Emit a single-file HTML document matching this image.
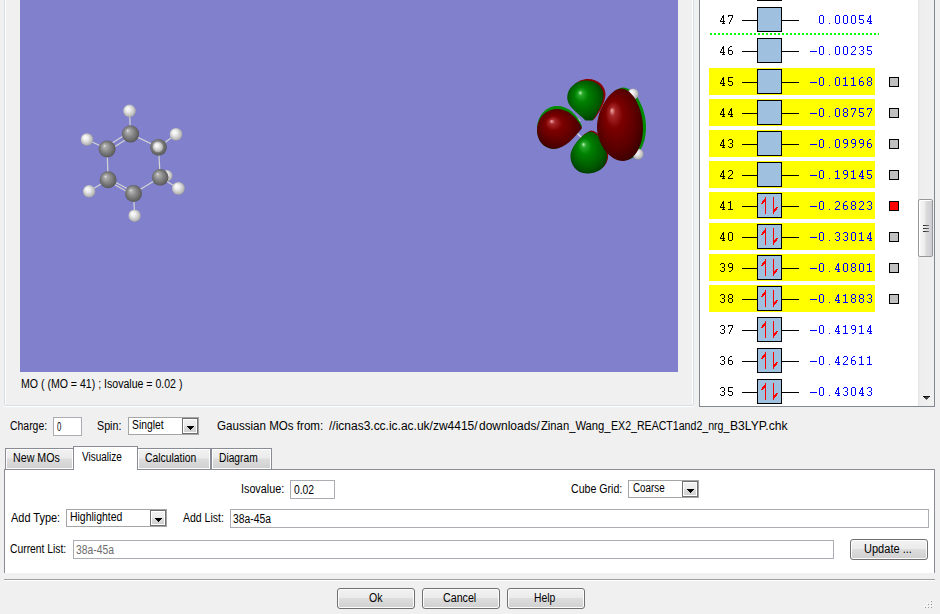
<!DOCTYPE html>
<html><head><meta charset="utf-8">
<style>
*{margin:0;padding:0;box-sizing:border-box}
html,body{width:940px;height:614px;overflow:hidden;background:#f0f0f0;position:relative;font-family:"Liberation Sans",sans-serif;font-size:12px;color:#000}
.a{position:absolute}
.t{position:absolute;white-space:pre;line-height:14px;font-size:12px;transform-origin:0 0;color:#000}
.inp{position:absolute;background:#fff;border:1px solid #abadb3}
.combo{position:absolute;background:#fff;border:1px solid #a5a5a5}
.dbtn{position:absolute;border:1px solid #707070;background:linear-gradient(#f2f2f2 0,#ebebeb 50%,#dddddd 50%,#cfcfcf 100%);box-shadow:inset 0 0 0 1px #fff}
.dbtn:after{content:"";position:absolute;left:4px;top:7px;width:7px;height:4px;background:linear-gradient(#000,#000) 0 0/7px 1px no-repeat,linear-gradient(#000,#000) 1px 1px/5px 1px no-repeat,linear-gradient(#000,#000) 2px 2px/3px 1px no-repeat,linear-gradient(#000,#000) 3px 3px/1px 1px no-repeat}
.btn{position:absolute;border:1px solid #707070;border-radius:3px;background:linear-gradient(#f2f2f2 0,#ebebeb 45%,#dddddd 50%,#cfcfcf 100%);box-shadow:inset 0 0 0 1px #fcfcfc}
.tab{position:absolute;border:1px solid #898c95;background:linear-gradient(#f2f2f2 0,#ebebeb 45%,#dddddd 50%,#cfcfcf 100%);box-shadow:inset 0 0 0 1px #fff}
.num{position:absolute;font-family:"Liberation Mono",monospace;font-size:13.33px;line-height:16px;white-space:pre;color:#000}
.en{position:absolute;font-family:"Liberation Mono",monospace;font-size:13.33px;line-height:16px;white-space:pre;color:#0000ff}
</style></head><body>
<div class="a" style="left:4px;top:-10px;width:690px;height:416px;border:1px solid #d5dfe5;border-radius:2px;box-shadow:inset 1px 0 0 #fff,inset -1px 0 0 #fff,0 1px 0 #fff"></div>
<div class="a" style="left:20px;top:0;width:658px;height:372px;background:#8080cc;overflow:hidden">
<svg width="658" height="372" viewBox="20 0 658 372">
<defs>
<radialGradient id="gC" cx="0.5" cy="0.5" r="0.58" fx="0.33" fy="0.3">
<stop offset="0" stop-color="#f0f0f0"/><stop offset="0.12" stop-color="#b4b4b4"/><stop offset="0.45" stop-color="#8a8a8a"/><stop offset="0.8" stop-color="#646464"/><stop offset="1" stop-color="#444444"/></radialGradient>
<radialGradient id="gH" cx="0.5" cy="0.5" r="0.58" fx="0.33" fy="0.3">
<stop offset="0" stop-color="#ffffff"/><stop offset="0.35" stop-color="#ececec"/><stop offset="0.75" stop-color="#bdbdbd"/><stop offset="1" stop-color="#8c8c8c"/></radialGradient>
<radialGradient id="gR" cx="0.5" cy="0.5" r="0.62" fx="0.32" fy="0.3">
<stop offset="0" stop-color="#f0b0b0"/><stop offset="0.1" stop-color="#a82828"/><stop offset="0.3" stop-color="#7c0000"/><stop offset="0.7" stop-color="#560000"/><stop offset="1" stop-color="#2a0000"/></radialGradient>
<radialGradient id="gG" cx="0.5" cy="0.5" r="0.62" fx="0.35" fy="0.3">
<stop offset="0" stop-color="#c0f4c0"/><stop offset="0.1" stop-color="#28a828"/><stop offset="0.3" stop-color="#008000"/><stop offset="0.7" stop-color="#005800"/><stop offset="1" stop-color="#002c00"/></radialGradient>
</defs>
<g stroke="#d4d4d4" stroke-width="1.2" fill="none">
<line x1="130.5" y1="133.9" x2="129.5" y2="110.9"/>
<line x1="107.1" y1="149" x2="86.9" y2="139.5"/>
<line x1="158.5" y1="147.3" x2="176" y2="134.3"/>
<line x1="108.1" y1="179.7" x2="89.1" y2="191.3"/>
<line x1="133.5" y1="193.5" x2="134.6" y2="215.7"/>
<line x1="160.2" y1="177.3" x2="178.4" y2="188.4"/>
<line x1="130.5" y1="133.9" x2="158.5" y2="147.3"/>
<line x1="158.5" y1="147.3" x2="160.2" y2="177.3"/>
<line x1="160.2" y1="177.3" x2="133.5" y2="193.5"/>
<line x1="107.1" y1="149" x2="108.1" y2="179.7"/>
<line x1="129.5" y1="132" x2="106" y2="147"/>
<line x1="131.5" y1="136" x2="108" y2="151"/>
<line x1="107" y1="178" x2="133" y2="191.5"/>
<line x1="109" y1="181.5" x2="134" y2="195.5"/>
</g>
<circle cx="129.5" cy="110.9" r="6.3" fill="url(#gH)"/>
<circle cx="86.9" cy="139.5" r="6.2" fill="url(#gH)"/>
<circle cx="176" cy="134.3" r="6.3" fill="url(#gH)"/>
<circle cx="89.1" cy="191.3" r="6.2" fill="url(#gH)"/>
<circle cx="134.6" cy="215.7" r="6.2" fill="url(#gH)"/>
<circle cx="178.4" cy="188.4" r="6.4" fill="url(#gH)"/>
<circle cx="167" cy="175.6" r="5.6" fill="url(#gH)"/>
<circle cx="130.5" cy="133.9" r="8.6" fill="url(#gC)"/>
<circle cx="107.1" cy="149" r="8.5" fill="url(#gC)"/>
<circle cx="158.5" cy="147.3" r="8.4" fill="url(#gC)"/>
<circle cx="108.1" cy="179.7" r="8.5" fill="url(#gC)"/>
<circle cx="133.5" cy="193.5" r="8.5" fill="url(#gC)"/>
<circle cx="160.2" cy="177.3" r="8.3" fill="url(#gC)"/>
<circle cx="158" cy="147" r="5.2" fill="url(#gH)"/>

<!-- orbital -->
<g stroke="#e0e0e0" stroke-width="1.2">
<line x1="575" y1="116" x2="580" y2="121"/>
<line x1="577" y1="133" x2="582" y2="138"/>
<line x1="600" y1="108" x2="605" y2="103"/>
<line x1="601" y1="143" x2="606" y2="148"/>
</g>
<path d="M 588,79 C 599,79 606,87 605.5,95 C 605,103 599,113 594,119.5 L 587,119.5 C 581,113 571,107 569.5,99 C 568,88 577,79 588,79 Z" fill="#8a0000"/>
<path d="M 586.5,80.5 C 597,80.5 604,88 603.5,96 C 603,104 597,114 592.5,120.5 L 585.5,120.5 C 579,114 569,108 567.5,100 C 566,89 575,80.5 586.5,80.5 Z" fill="url(#gG)"/>
<path d="M 582,126 C 575,136 565,148 553,149 C 543,148 537,140 537,129 C 537,116 546,106 557,106 C 568,106 577,114 582,126 Z" fill="#008a00"/>
<path d="M 582,128 C 575,137 565,149 553,149 C 543,148 537,140 537,130 C 537,118 546,109 557,109 C 568,109 577,117 582,128 Z" fill="url(#gR)"/>
<path d="M 591,130.5 C 598,131 606,141 608,154 C 609,164 601,172.5 588,172.5 C 577,172.5 571,163 571.5,154 C 572,146 583,133 591,130.5 Z" fill="#8a0000"/>
<path d="M 590,131.5 C 597,132 605,142 607,155 C 608,165 600,173.5 587,173.5 C 576,173.5 570,164 570.5,155 C 571,147 582,134 590,131.5 Z" fill="url(#gG)"/>
<path d="M 623.5,87.5 C 634,87.5 646,107 646,127 C 646,146 637,160 625,160 C 611,160 600,142 600,126 C 600,109 612,87.5 623.5,87.5 Z" fill="#008a00"/>
<circle cx="633" cy="94" r="5.5" fill="url(#gH)"/>
<circle cx="638" cy="154" r="5.5" fill="url(#gH)"/>
<path d="M 621.5,88.5 C 632,88.5 643,108 643,128 C 643,147 634,161 623,161 C 609,161 597,143 597,127 C 597,110 610,88.5 621.5,88.5 Z" fill="url(#gR)"/>
</svg>
</div>
<div class="a" style="left:699px;top:-10px;width:236px;height:417px;border:1px solid #828790;background:#fff"></div>
<div class="a" style="left:918px;top:0;width:16px;height:406px;background:linear-gradient(90deg,#e3e3e3 0,#eeeeee 2px,#f0f0f0 100%)"></div>
<div class="a" style="left:918px;top:199px;width:15px;height:58px;border:1px solid #979797;border-radius:2px;background:linear-gradient(90deg,#f8f8f8 0,#ececec 45%,#dcdcdc 52%,#cdcdd1 100%);box-shadow:inset 1px 1px 0 #fff"></div>
<div class="a" style="left:923px;top:225px;width:6px;height:1px;background:linear-gradient(90deg,#222,#777)"></div>
<div class="a" style="left:923px;top:228px;width:6px;height:1px;background:linear-gradient(90deg,#222,#777)"></div>
<div class="a" style="left:923px;top:231px;width:6px;height:1px;background:linear-gradient(90deg,#222,#777)"></div>
<div class="a" style="left:923px;top:396px;width:7px;height:4px;background:linear-gradient(#111,#111) 0 0/7px 1px no-repeat,linear-gradient(90deg,#222,#666) 1px 1px/5px 1px no-repeat,linear-gradient(#444,#444) 2px 2px/3px 1px no-repeat,linear-gradient(#666,#666) 3px 3px/1px 1px no-repeat"></div>
<div class="a" style="left:700px;top:0;width:218px;height:406px;overflow:hidden">
<svg class="a" style="left:0;top:0" width="218" height="406" shape-rendering="crispEdges"><rect x="42" y="-11" width="15" height="1" fill="#000"/><rect x="82" y="-11" width="17" height="1" fill="#000"/><rect x="57" y="-24" width="25" height="25" fill="#000"/><rect x="58" y="-23" width="23" height="23" fill="#a0c0e0"/><rect x="42" y="20" width="15" height="1" fill="#000"/><rect x="82" y="20" width="17" height="1" fill="#000"/><rect x="57" y="7" width="25" height="25" fill="#000"/><rect x="58" y="8" width="23" height="23" fill="#a0c0e0"/><g fill="#000"><path transform="translate(20 15)" d="M3 0h1v1h-1zM2 1h2v1h-2zM2 2h2v1h-2zM1 3h1v1h-1zM3 3h1v1h-1zM1 4h1v1h-1zM3 4h1v1h-1zM0 5h1v1h-1zM3 5h1v1h-1zM0 6h5v1h-5zM3 7h1v1h-1zM2 8h3v1h-3z"/><path transform="translate(28 15)" d="M0 0h5v1h-5zM0 1h1v1h-1zM4 1h1v1h-1zM4 2h1v1h-1zM3 3h1v1h-1zM3 4h1v1h-1zM2 5h1v1h-1zM2 6h1v1h-1zM1 7h1v1h-1zM1 8h1v1h-1z"/></g><g fill="#0000ff"><path transform="translate(119 15)" d="M1 0h3v1h-3zM0 1h1v1h-1zM4 1h1v1h-1zM0 2h1v1h-1zM4 2h1v1h-1zM0 3h1v1h-1zM4 3h1v1h-1zM0 4h1v1h-1zM4 4h1v1h-1zM0 5h1v1h-1zM4 5h1v1h-1zM0 6h1v1h-1zM4 6h1v1h-1zM0 7h1v1h-1zM4 7h1v1h-1zM1 8h3v1h-3z"/><path transform="translate(126 15)" d="M3 8h1v1h-1z"/><path transform="translate(135 15)" d="M1 0h3v1h-3zM0 1h1v1h-1zM4 1h1v1h-1zM0 2h1v1h-1zM4 2h1v1h-1zM0 3h1v1h-1zM4 3h1v1h-1zM0 4h1v1h-1zM4 4h1v1h-1zM0 5h1v1h-1zM4 5h1v1h-1zM0 6h1v1h-1zM4 6h1v1h-1zM0 7h1v1h-1zM4 7h1v1h-1zM1 8h3v1h-3z"/><path transform="translate(143 15)" d="M1 0h3v1h-3zM0 1h1v1h-1zM4 1h1v1h-1zM0 2h1v1h-1zM4 2h1v1h-1zM0 3h1v1h-1zM4 3h1v1h-1zM0 4h1v1h-1zM4 4h1v1h-1zM0 5h1v1h-1zM4 5h1v1h-1zM0 6h1v1h-1zM4 6h1v1h-1zM0 7h1v1h-1zM4 7h1v1h-1zM1 8h3v1h-3z"/><path transform="translate(151 15)" d="M1 0h3v1h-3zM0 1h1v1h-1zM4 1h1v1h-1zM0 2h1v1h-1zM4 2h1v1h-1zM0 3h1v1h-1zM4 3h1v1h-1zM0 4h1v1h-1zM4 4h1v1h-1zM0 5h1v1h-1zM4 5h1v1h-1zM0 6h1v1h-1zM4 6h1v1h-1zM0 7h1v1h-1zM4 7h1v1h-1zM1 8h3v1h-3z"/><path transform="translate(159 15)" d="M0 0h5v1h-5zM0 1h1v1h-1zM0 2h1v1h-1zM0 3h1v1h-1zM0 4h4v1h-4zM4 5h1v1h-1zM4 6h1v1h-1zM0 7h1v1h-1zM4 7h1v1h-1zM1 8h3v1h-3z"/><path transform="translate(167 15)" d="M3 0h1v1h-1zM2 1h2v1h-2zM2 2h2v1h-2zM1 3h1v1h-1zM3 3h1v1h-1zM1 4h1v1h-1zM3 4h1v1h-1zM0 5h1v1h-1zM3 5h1v1h-1zM0 6h5v1h-5zM3 7h1v1h-1zM2 8h3v1h-3z"/></g><rect x="42" y="51" width="15" height="1" fill="#000"/><rect x="82" y="51" width="17" height="1" fill="#000"/><rect x="57" y="38" width="25" height="25" fill="#000"/><rect x="58" y="39" width="23" height="23" fill="#a0c0e0"/><g fill="#000"><path transform="translate(20 46)" d="M3 0h1v1h-1zM2 1h2v1h-2zM2 2h2v1h-2zM1 3h1v1h-1zM3 3h1v1h-1zM1 4h1v1h-1zM3 4h1v1h-1zM0 5h1v1h-1zM3 5h1v1h-1zM0 6h5v1h-5zM3 7h1v1h-1zM2 8h3v1h-3z"/><path transform="translate(28 46)" d="M2 0h2v1h-2zM1 1h1v1h-1zM0 2h1v1h-1zM0 3h1v1h-1zM0 4h4v1h-4zM0 5h1v1h-1zM4 5h1v1h-1zM0 6h1v1h-1zM4 6h1v1h-1zM0 7h1v1h-1zM4 7h1v1h-1zM1 8h3v1h-3z"/></g><g fill="#0000ff"><path transform="translate(110 46)" d="M0 5h7v1h-7z"/><path transform="translate(119 46)" d="M1 0h3v1h-3zM0 1h1v1h-1zM4 1h1v1h-1zM0 2h1v1h-1zM4 2h1v1h-1zM0 3h1v1h-1zM4 3h1v1h-1zM0 4h1v1h-1zM4 4h1v1h-1zM0 5h1v1h-1zM4 5h1v1h-1zM0 6h1v1h-1zM4 6h1v1h-1zM0 7h1v1h-1zM4 7h1v1h-1zM1 8h3v1h-3z"/><path transform="translate(126 46)" d="M3 8h1v1h-1z"/><path transform="translate(135 46)" d="M1 0h3v1h-3zM0 1h1v1h-1zM4 1h1v1h-1zM0 2h1v1h-1zM4 2h1v1h-1zM0 3h1v1h-1zM4 3h1v1h-1zM0 4h1v1h-1zM4 4h1v1h-1zM0 5h1v1h-1zM4 5h1v1h-1zM0 6h1v1h-1zM4 6h1v1h-1zM0 7h1v1h-1zM4 7h1v1h-1zM1 8h3v1h-3z"/><path transform="translate(143 46)" d="M1 0h3v1h-3zM0 1h1v1h-1zM4 1h1v1h-1zM0 2h1v1h-1zM4 2h1v1h-1zM0 3h1v1h-1zM4 3h1v1h-1zM0 4h1v1h-1zM4 4h1v1h-1zM0 5h1v1h-1zM4 5h1v1h-1zM0 6h1v1h-1zM4 6h1v1h-1zM0 7h1v1h-1zM4 7h1v1h-1zM1 8h3v1h-3z"/><path transform="translate(151 46)" d="M1 0h3v1h-3zM0 1h1v1h-1zM4 1h1v1h-1zM4 2h1v1h-1zM4 3h1v1h-1zM3 4h1v1h-1zM2 5h1v1h-1zM1 6h1v1h-1zM0 7h1v1h-1zM0 8h5v1h-5z"/><path transform="translate(159 46)" d="M1 0h3v1h-3zM0 1h1v1h-1zM4 1h1v1h-1zM4 2h1v1h-1zM4 3h1v1h-1zM2 4h2v1h-2zM4 5h1v1h-1zM4 6h1v1h-1zM0 7h1v1h-1zM4 7h1v1h-1zM1 8h3v1h-3z"/><path transform="translate(167 46)" d="M0 0h5v1h-5zM0 1h1v1h-1zM0 2h1v1h-1zM0 3h1v1h-1zM0 4h4v1h-4zM4 5h1v1h-1zM4 6h1v1h-1zM0 7h1v1h-1zM4 7h1v1h-1zM1 8h3v1h-3z"/></g><rect x="9" y="68" width="166" height="27" fill="#ff0"/><rect x="189" y="77" width="10" height="10" fill="#000"/><rect x="190" y="78" width="8" height="8" fill="#c0c0c0"/><rect x="42" y="82" width="15" height="1" fill="#000"/><rect x="82" y="82" width="17" height="1" fill="#000"/><rect x="57" y="69" width="25" height="25" fill="#000"/><rect x="58" y="70" width="23" height="23" fill="#a0c0e0"/><g fill="#000"><path transform="translate(20 77)" d="M3 0h1v1h-1zM2 1h2v1h-2zM2 2h2v1h-2zM1 3h1v1h-1zM3 3h1v1h-1zM1 4h1v1h-1zM3 4h1v1h-1zM0 5h1v1h-1zM3 5h1v1h-1zM0 6h5v1h-5zM3 7h1v1h-1zM2 8h3v1h-3z"/><path transform="translate(28 77)" d="M0 0h5v1h-5zM0 1h1v1h-1zM0 2h1v1h-1zM0 3h1v1h-1zM0 4h4v1h-4zM4 5h1v1h-1zM4 6h1v1h-1zM0 7h1v1h-1zM4 7h1v1h-1zM1 8h3v1h-3z"/></g><g fill="#0000ff"><path transform="translate(110 77)" d="M0 5h7v1h-7z"/><path transform="translate(119 77)" d="M1 0h3v1h-3zM0 1h1v1h-1zM4 1h1v1h-1zM0 2h1v1h-1zM4 2h1v1h-1zM0 3h1v1h-1zM4 3h1v1h-1zM0 4h1v1h-1zM4 4h1v1h-1zM0 5h1v1h-1zM4 5h1v1h-1zM0 6h1v1h-1zM4 6h1v1h-1zM0 7h1v1h-1zM4 7h1v1h-1zM1 8h3v1h-3z"/><path transform="translate(126 77)" d="M3 8h1v1h-1z"/><path transform="translate(135 77)" d="M1 0h3v1h-3zM0 1h1v1h-1zM4 1h1v1h-1zM0 2h1v1h-1zM4 2h1v1h-1zM0 3h1v1h-1zM4 3h1v1h-1zM0 4h1v1h-1zM4 4h1v1h-1zM0 5h1v1h-1zM4 5h1v1h-1zM0 6h1v1h-1zM4 6h1v1h-1zM0 7h1v1h-1zM4 7h1v1h-1zM1 8h3v1h-3z"/><path transform="translate(143 77)" d="M2 0h1v1h-1zM0 1h3v1h-3zM2 2h1v1h-1zM2 3h1v1h-1zM2 4h1v1h-1zM2 5h1v1h-1zM2 6h1v1h-1zM2 7h1v1h-1zM0 8h5v1h-5z"/><path transform="translate(151 77)" d="M2 0h1v1h-1zM0 1h3v1h-3zM2 2h1v1h-1zM2 3h1v1h-1zM2 4h1v1h-1zM2 5h1v1h-1zM2 6h1v1h-1zM2 7h1v1h-1zM0 8h5v1h-5z"/><path transform="translate(159 77)" d="M2 0h2v1h-2zM1 1h1v1h-1zM0 2h1v1h-1zM0 3h1v1h-1zM0 4h4v1h-4zM0 5h1v1h-1zM4 5h1v1h-1zM0 6h1v1h-1zM4 6h1v1h-1zM0 7h1v1h-1zM4 7h1v1h-1zM1 8h3v1h-3z"/><path transform="translate(167 77)" d="M1 0h3v1h-3zM0 1h1v1h-1zM4 1h1v1h-1zM0 2h1v1h-1zM4 2h1v1h-1zM0 3h1v1h-1zM4 3h1v1h-1zM1 4h3v1h-3zM0 5h1v1h-1zM4 5h1v1h-1zM0 6h1v1h-1zM4 6h1v1h-1zM0 7h1v1h-1zM4 7h1v1h-1zM1 8h3v1h-3z"/></g><rect x="9" y="99" width="166" height="27" fill="#ff0"/><rect x="189" y="108" width="10" height="10" fill="#000"/><rect x="190" y="109" width="8" height="8" fill="#c0c0c0"/><rect x="42" y="113" width="15" height="1" fill="#000"/><rect x="82" y="113" width="17" height="1" fill="#000"/><rect x="57" y="100" width="25" height="25" fill="#000"/><rect x="58" y="101" width="23" height="23" fill="#a0c0e0"/><g fill="#000"><path transform="translate(20 108)" d="M3 0h1v1h-1zM2 1h2v1h-2zM2 2h2v1h-2zM1 3h1v1h-1zM3 3h1v1h-1zM1 4h1v1h-1zM3 4h1v1h-1zM0 5h1v1h-1zM3 5h1v1h-1zM0 6h5v1h-5zM3 7h1v1h-1zM2 8h3v1h-3z"/><path transform="translate(28 108)" d="M3 0h1v1h-1zM2 1h2v1h-2zM2 2h2v1h-2zM1 3h1v1h-1zM3 3h1v1h-1zM1 4h1v1h-1zM3 4h1v1h-1zM0 5h1v1h-1zM3 5h1v1h-1zM0 6h5v1h-5zM3 7h1v1h-1zM2 8h3v1h-3z"/></g><g fill="#0000ff"><path transform="translate(110 108)" d="M0 5h7v1h-7z"/><path transform="translate(119 108)" d="M1 0h3v1h-3zM0 1h1v1h-1zM4 1h1v1h-1zM0 2h1v1h-1zM4 2h1v1h-1zM0 3h1v1h-1zM4 3h1v1h-1zM0 4h1v1h-1zM4 4h1v1h-1zM0 5h1v1h-1zM4 5h1v1h-1zM0 6h1v1h-1zM4 6h1v1h-1zM0 7h1v1h-1zM4 7h1v1h-1zM1 8h3v1h-3z"/><path transform="translate(126 108)" d="M3 8h1v1h-1z"/><path transform="translate(135 108)" d="M1 0h3v1h-3zM0 1h1v1h-1zM4 1h1v1h-1zM0 2h1v1h-1zM4 2h1v1h-1zM0 3h1v1h-1zM4 3h1v1h-1zM0 4h1v1h-1zM4 4h1v1h-1zM0 5h1v1h-1zM4 5h1v1h-1zM0 6h1v1h-1zM4 6h1v1h-1zM0 7h1v1h-1zM4 7h1v1h-1zM1 8h3v1h-3z"/><path transform="translate(143 108)" d="M1 0h3v1h-3zM0 1h1v1h-1zM4 1h1v1h-1zM0 2h1v1h-1zM4 2h1v1h-1zM0 3h1v1h-1zM4 3h1v1h-1zM1 4h3v1h-3zM0 5h1v1h-1zM4 5h1v1h-1zM0 6h1v1h-1zM4 6h1v1h-1zM0 7h1v1h-1zM4 7h1v1h-1zM1 8h3v1h-3z"/><path transform="translate(151 108)" d="M0 0h5v1h-5zM0 1h1v1h-1zM4 1h1v1h-1zM4 2h1v1h-1zM3 3h1v1h-1zM3 4h1v1h-1zM2 5h1v1h-1zM2 6h1v1h-1zM1 7h1v1h-1zM1 8h1v1h-1z"/><path transform="translate(159 108)" d="M0 0h5v1h-5zM0 1h1v1h-1zM0 2h1v1h-1zM0 3h1v1h-1zM0 4h4v1h-4zM4 5h1v1h-1zM4 6h1v1h-1zM0 7h1v1h-1zM4 7h1v1h-1zM1 8h3v1h-3z"/><path transform="translate(167 108)" d="M0 0h5v1h-5zM0 1h1v1h-1zM4 1h1v1h-1zM4 2h1v1h-1zM3 3h1v1h-1zM3 4h1v1h-1zM2 5h1v1h-1zM2 6h1v1h-1zM1 7h1v1h-1zM1 8h1v1h-1z"/></g><rect x="9" y="130" width="166" height="27" fill="#ff0"/><rect x="189" y="139" width="10" height="10" fill="#000"/><rect x="190" y="140" width="8" height="8" fill="#c0c0c0"/><rect x="42" y="144" width="15" height="1" fill="#000"/><rect x="82" y="144" width="17" height="1" fill="#000"/><rect x="57" y="131" width="25" height="25" fill="#000"/><rect x="58" y="132" width="23" height="23" fill="#a0c0e0"/><g fill="#000"><path transform="translate(20 139)" d="M3 0h1v1h-1zM2 1h2v1h-2zM2 2h2v1h-2zM1 3h1v1h-1zM3 3h1v1h-1zM1 4h1v1h-1zM3 4h1v1h-1zM0 5h1v1h-1zM3 5h1v1h-1zM0 6h5v1h-5zM3 7h1v1h-1zM2 8h3v1h-3z"/><path transform="translate(28 139)" d="M1 0h3v1h-3zM0 1h1v1h-1zM4 1h1v1h-1zM4 2h1v1h-1zM4 3h1v1h-1zM2 4h2v1h-2zM4 5h1v1h-1zM4 6h1v1h-1zM0 7h1v1h-1zM4 7h1v1h-1zM1 8h3v1h-3z"/></g><g fill="#0000ff"><path transform="translate(110 139)" d="M0 5h7v1h-7z"/><path transform="translate(119 139)" d="M1 0h3v1h-3zM0 1h1v1h-1zM4 1h1v1h-1zM0 2h1v1h-1zM4 2h1v1h-1zM0 3h1v1h-1zM4 3h1v1h-1zM0 4h1v1h-1zM4 4h1v1h-1zM0 5h1v1h-1zM4 5h1v1h-1zM0 6h1v1h-1zM4 6h1v1h-1zM0 7h1v1h-1zM4 7h1v1h-1zM1 8h3v1h-3z"/><path transform="translate(126 139)" d="M3 8h1v1h-1z"/><path transform="translate(135 139)" d="M1 0h3v1h-3zM0 1h1v1h-1zM4 1h1v1h-1zM0 2h1v1h-1zM4 2h1v1h-1zM0 3h1v1h-1zM4 3h1v1h-1zM0 4h1v1h-1zM4 4h1v1h-1zM0 5h1v1h-1zM4 5h1v1h-1zM0 6h1v1h-1zM4 6h1v1h-1zM0 7h1v1h-1zM4 7h1v1h-1zM1 8h3v1h-3z"/><path transform="translate(143 139)" d="M1 0h3v1h-3zM0 1h1v1h-1zM4 1h1v1h-1zM0 2h1v1h-1zM4 2h1v1h-1zM0 3h1v1h-1zM4 3h1v1h-1zM1 4h4v1h-4zM4 5h1v1h-1zM4 6h1v1h-1zM3 7h1v1h-1zM1 8h2v1h-2z"/><path transform="translate(151 139)" d="M1 0h3v1h-3zM0 1h1v1h-1zM4 1h1v1h-1zM0 2h1v1h-1zM4 2h1v1h-1zM0 3h1v1h-1zM4 3h1v1h-1zM1 4h4v1h-4zM4 5h1v1h-1zM4 6h1v1h-1zM3 7h1v1h-1zM1 8h2v1h-2z"/><path transform="translate(159 139)" d="M1 0h3v1h-3zM0 1h1v1h-1zM4 1h1v1h-1zM0 2h1v1h-1zM4 2h1v1h-1zM0 3h1v1h-1zM4 3h1v1h-1zM1 4h4v1h-4zM4 5h1v1h-1zM4 6h1v1h-1zM3 7h1v1h-1zM1 8h2v1h-2z"/><path transform="translate(167 139)" d="M2 0h2v1h-2zM1 1h1v1h-1zM0 2h1v1h-1zM0 3h1v1h-1zM0 4h4v1h-4zM0 5h1v1h-1zM4 5h1v1h-1zM0 6h1v1h-1zM4 6h1v1h-1zM0 7h1v1h-1zM4 7h1v1h-1zM1 8h3v1h-3z"/></g><rect x="9" y="161" width="166" height="27" fill="#ff0"/><rect x="189" y="170" width="10" height="10" fill="#000"/><rect x="190" y="171" width="8" height="8" fill="#c0c0c0"/><rect x="42" y="175" width="15" height="1" fill="#000"/><rect x="82" y="175" width="17" height="1" fill="#000"/><rect x="57" y="162" width="25" height="25" fill="#000"/><rect x="58" y="163" width="23" height="23" fill="#a0c0e0"/><g fill="#000"><path transform="translate(20 170)" d="M3 0h1v1h-1zM2 1h2v1h-2zM2 2h2v1h-2zM1 3h1v1h-1zM3 3h1v1h-1zM1 4h1v1h-1zM3 4h1v1h-1zM0 5h1v1h-1zM3 5h1v1h-1zM0 6h5v1h-5zM3 7h1v1h-1zM2 8h3v1h-3z"/><path transform="translate(28 170)" d="M1 0h3v1h-3zM0 1h1v1h-1zM4 1h1v1h-1zM4 2h1v1h-1zM4 3h1v1h-1zM3 4h1v1h-1zM2 5h1v1h-1zM1 6h1v1h-1zM0 7h1v1h-1zM0 8h5v1h-5z"/></g><g fill="#0000ff"><path transform="translate(110 170)" d="M0 5h7v1h-7z"/><path transform="translate(119 170)" d="M1 0h3v1h-3zM0 1h1v1h-1zM4 1h1v1h-1zM0 2h1v1h-1zM4 2h1v1h-1zM0 3h1v1h-1zM4 3h1v1h-1zM0 4h1v1h-1zM4 4h1v1h-1zM0 5h1v1h-1zM4 5h1v1h-1zM0 6h1v1h-1zM4 6h1v1h-1zM0 7h1v1h-1zM4 7h1v1h-1zM1 8h3v1h-3z"/><path transform="translate(126 170)" d="M3 8h1v1h-1z"/><path transform="translate(135 170)" d="M2 0h1v1h-1zM0 1h3v1h-3zM2 2h1v1h-1zM2 3h1v1h-1zM2 4h1v1h-1zM2 5h1v1h-1zM2 6h1v1h-1zM2 7h1v1h-1zM0 8h5v1h-5z"/><path transform="translate(143 170)" d="M1 0h3v1h-3zM0 1h1v1h-1zM4 1h1v1h-1zM0 2h1v1h-1zM4 2h1v1h-1zM0 3h1v1h-1zM4 3h1v1h-1zM1 4h4v1h-4zM4 5h1v1h-1zM4 6h1v1h-1zM3 7h1v1h-1zM1 8h2v1h-2z"/><path transform="translate(151 170)" d="M2 0h1v1h-1zM0 1h3v1h-3zM2 2h1v1h-1zM2 3h1v1h-1zM2 4h1v1h-1zM2 5h1v1h-1zM2 6h1v1h-1zM2 7h1v1h-1zM0 8h5v1h-5z"/><path transform="translate(159 170)" d="M3 0h1v1h-1zM2 1h2v1h-2zM2 2h2v1h-2zM1 3h1v1h-1zM3 3h1v1h-1zM1 4h1v1h-1zM3 4h1v1h-1zM0 5h1v1h-1zM3 5h1v1h-1zM0 6h5v1h-5zM3 7h1v1h-1zM2 8h3v1h-3z"/><path transform="translate(167 170)" d="M0 0h5v1h-5zM0 1h1v1h-1zM0 2h1v1h-1zM0 3h1v1h-1zM0 4h4v1h-4zM4 5h1v1h-1zM4 6h1v1h-1zM0 7h1v1h-1zM4 7h1v1h-1zM1 8h3v1h-3z"/></g><rect x="9" y="192" width="166" height="27" fill="#ff0"/><rect x="189" y="201" width="10" height="10" fill="#000"/><rect x="190" y="202" width="8" height="8" fill="#f00"/><rect x="42" y="206" width="15" height="1" fill="#000"/><rect x="82" y="206" width="17" height="1" fill="#000"/><rect x="57" y="193" width="25" height="25" fill="#000"/><rect x="58" y="194" width="23" height="23" fill="#a0c0e0"/><rect x="65" y="197" width="1.4" height="17" fill="#f00"/><polygon points="66,197 60.5,204 62.799999999999955,204 66,200" fill="#f00"/><rect x="73" y="197" width="1.4" height="17" fill="#f00"/><polygon points="73,214 78.5,207 76.20000000000005,207 73,211" fill="#f00"/><g fill="#000"><path transform="translate(20 201)" d="M3 0h1v1h-1zM2 1h2v1h-2zM2 2h2v1h-2zM1 3h1v1h-1zM3 3h1v1h-1zM1 4h1v1h-1zM3 4h1v1h-1zM0 5h1v1h-1zM3 5h1v1h-1zM0 6h5v1h-5zM3 7h1v1h-1zM2 8h3v1h-3z"/><path transform="translate(28 201)" d="M2 0h1v1h-1zM0 1h3v1h-3zM2 2h1v1h-1zM2 3h1v1h-1zM2 4h1v1h-1zM2 5h1v1h-1zM2 6h1v1h-1zM2 7h1v1h-1zM0 8h5v1h-5z"/></g><g fill="#0000ff"><path transform="translate(110 201)" d="M0 5h7v1h-7z"/><path transform="translate(119 201)" d="M1 0h3v1h-3zM0 1h1v1h-1zM4 1h1v1h-1zM0 2h1v1h-1zM4 2h1v1h-1zM0 3h1v1h-1zM4 3h1v1h-1zM0 4h1v1h-1zM4 4h1v1h-1zM0 5h1v1h-1zM4 5h1v1h-1zM0 6h1v1h-1zM4 6h1v1h-1zM0 7h1v1h-1zM4 7h1v1h-1zM1 8h3v1h-3z"/><path transform="translate(126 201)" d="M3 8h1v1h-1z"/><path transform="translate(135 201)" d="M1 0h3v1h-3zM0 1h1v1h-1zM4 1h1v1h-1zM4 2h1v1h-1zM4 3h1v1h-1zM3 4h1v1h-1zM2 5h1v1h-1zM1 6h1v1h-1zM0 7h1v1h-1zM0 8h5v1h-5z"/><path transform="translate(143 201)" d="M2 0h2v1h-2zM1 1h1v1h-1zM0 2h1v1h-1zM0 3h1v1h-1zM0 4h4v1h-4zM0 5h1v1h-1zM4 5h1v1h-1zM0 6h1v1h-1zM4 6h1v1h-1zM0 7h1v1h-1zM4 7h1v1h-1zM1 8h3v1h-3z"/><path transform="translate(151 201)" d="M1 0h3v1h-3zM0 1h1v1h-1zM4 1h1v1h-1zM0 2h1v1h-1zM4 2h1v1h-1zM0 3h1v1h-1zM4 3h1v1h-1zM1 4h3v1h-3zM0 5h1v1h-1zM4 5h1v1h-1zM0 6h1v1h-1zM4 6h1v1h-1zM0 7h1v1h-1zM4 7h1v1h-1zM1 8h3v1h-3z"/><path transform="translate(159 201)" d="M1 0h3v1h-3zM0 1h1v1h-1zM4 1h1v1h-1zM4 2h1v1h-1zM4 3h1v1h-1zM3 4h1v1h-1zM2 5h1v1h-1zM1 6h1v1h-1zM0 7h1v1h-1zM0 8h5v1h-5z"/><path transform="translate(167 201)" d="M1 0h3v1h-3zM0 1h1v1h-1zM4 1h1v1h-1zM4 2h1v1h-1zM4 3h1v1h-1zM2 4h2v1h-2zM4 5h1v1h-1zM4 6h1v1h-1zM0 7h1v1h-1zM4 7h1v1h-1zM1 8h3v1h-3z"/></g><rect x="9" y="223" width="166" height="27" fill="#ff0"/><rect x="189" y="232" width="10" height="10" fill="#000"/><rect x="190" y="233" width="8" height="8" fill="#c0c0c0"/><rect x="42" y="237" width="15" height="1" fill="#000"/><rect x="82" y="237" width="17" height="1" fill="#000"/><rect x="57" y="224" width="25" height="25" fill="#000"/><rect x="58" y="225" width="23" height="23" fill="#a0c0e0"/><rect x="65" y="228" width="1.4" height="17" fill="#f00"/><polygon points="66,228 60.5,235 62.799999999999955,235 66,231" fill="#f00"/><rect x="73" y="228" width="1.4" height="17" fill="#f00"/><polygon points="73,245 78.5,238 76.20000000000005,238 73,242" fill="#f00"/><g fill="#000"><path transform="translate(20 232)" d="M3 0h1v1h-1zM2 1h2v1h-2zM2 2h2v1h-2zM1 3h1v1h-1zM3 3h1v1h-1zM1 4h1v1h-1zM3 4h1v1h-1zM0 5h1v1h-1zM3 5h1v1h-1zM0 6h5v1h-5zM3 7h1v1h-1zM2 8h3v1h-3z"/><path transform="translate(28 232)" d="M1 0h3v1h-3zM0 1h1v1h-1zM4 1h1v1h-1zM0 2h1v1h-1zM4 2h1v1h-1zM0 3h1v1h-1zM4 3h1v1h-1zM0 4h1v1h-1zM4 4h1v1h-1zM0 5h1v1h-1zM4 5h1v1h-1zM0 6h1v1h-1zM4 6h1v1h-1zM0 7h1v1h-1zM4 7h1v1h-1zM1 8h3v1h-3z"/></g><g fill="#0000ff"><path transform="translate(110 232)" d="M0 5h7v1h-7z"/><path transform="translate(119 232)" d="M1 0h3v1h-3zM0 1h1v1h-1zM4 1h1v1h-1zM0 2h1v1h-1zM4 2h1v1h-1zM0 3h1v1h-1zM4 3h1v1h-1zM0 4h1v1h-1zM4 4h1v1h-1zM0 5h1v1h-1zM4 5h1v1h-1zM0 6h1v1h-1zM4 6h1v1h-1zM0 7h1v1h-1zM4 7h1v1h-1zM1 8h3v1h-3z"/><path transform="translate(126 232)" d="M3 8h1v1h-1z"/><path transform="translate(135 232)" d="M1 0h3v1h-3zM0 1h1v1h-1zM4 1h1v1h-1zM4 2h1v1h-1zM4 3h1v1h-1zM2 4h2v1h-2zM4 5h1v1h-1zM4 6h1v1h-1zM0 7h1v1h-1zM4 7h1v1h-1zM1 8h3v1h-3z"/><path transform="translate(143 232)" d="M1 0h3v1h-3zM0 1h1v1h-1zM4 1h1v1h-1zM4 2h1v1h-1zM4 3h1v1h-1zM2 4h2v1h-2zM4 5h1v1h-1zM4 6h1v1h-1zM0 7h1v1h-1zM4 7h1v1h-1zM1 8h3v1h-3z"/><path transform="translate(151 232)" d="M1 0h3v1h-3zM0 1h1v1h-1zM4 1h1v1h-1zM0 2h1v1h-1zM4 2h1v1h-1zM0 3h1v1h-1zM4 3h1v1h-1zM0 4h1v1h-1zM4 4h1v1h-1zM0 5h1v1h-1zM4 5h1v1h-1zM0 6h1v1h-1zM4 6h1v1h-1zM0 7h1v1h-1zM4 7h1v1h-1zM1 8h3v1h-3z"/><path transform="translate(159 232)" d="M2 0h1v1h-1zM0 1h3v1h-3zM2 2h1v1h-1zM2 3h1v1h-1zM2 4h1v1h-1zM2 5h1v1h-1zM2 6h1v1h-1zM2 7h1v1h-1zM0 8h5v1h-5z"/><path transform="translate(167 232)" d="M3 0h1v1h-1zM2 1h2v1h-2zM2 2h2v1h-2zM1 3h1v1h-1zM3 3h1v1h-1zM1 4h1v1h-1zM3 4h1v1h-1zM0 5h1v1h-1zM3 5h1v1h-1zM0 6h5v1h-5zM3 7h1v1h-1zM2 8h3v1h-3z"/></g><rect x="9" y="254" width="166" height="27" fill="#ff0"/><rect x="189" y="263" width="10" height="10" fill="#000"/><rect x="190" y="264" width="8" height="8" fill="#c0c0c0"/><rect x="42" y="268" width="15" height="1" fill="#000"/><rect x="82" y="268" width="17" height="1" fill="#000"/><rect x="57" y="255" width="25" height="25" fill="#000"/><rect x="58" y="256" width="23" height="23" fill="#a0c0e0"/><rect x="65" y="259" width="1.4" height="17" fill="#f00"/><polygon points="66,259 60.5,266 62.799999999999955,266 66,262" fill="#f00"/><rect x="73" y="259" width="1.4" height="17" fill="#f00"/><polygon points="73,276 78.5,269 76.20000000000005,269 73,273" fill="#f00"/><g fill="#000"><path transform="translate(20 263)" d="M1 0h3v1h-3zM0 1h1v1h-1zM4 1h1v1h-1zM4 2h1v1h-1zM4 3h1v1h-1zM2 4h2v1h-2zM4 5h1v1h-1zM4 6h1v1h-1zM0 7h1v1h-1zM4 7h1v1h-1zM1 8h3v1h-3z"/><path transform="translate(28 263)" d="M1 0h3v1h-3zM0 1h1v1h-1zM4 1h1v1h-1zM0 2h1v1h-1zM4 2h1v1h-1zM0 3h1v1h-1zM4 3h1v1h-1zM1 4h4v1h-4zM4 5h1v1h-1zM4 6h1v1h-1zM3 7h1v1h-1zM1 8h2v1h-2z"/></g><g fill="#0000ff"><path transform="translate(110 263)" d="M0 5h7v1h-7z"/><path transform="translate(119 263)" d="M1 0h3v1h-3zM0 1h1v1h-1zM4 1h1v1h-1zM0 2h1v1h-1zM4 2h1v1h-1zM0 3h1v1h-1zM4 3h1v1h-1zM0 4h1v1h-1zM4 4h1v1h-1zM0 5h1v1h-1zM4 5h1v1h-1zM0 6h1v1h-1zM4 6h1v1h-1zM0 7h1v1h-1zM4 7h1v1h-1zM1 8h3v1h-3z"/><path transform="translate(126 263)" d="M3 8h1v1h-1z"/><path transform="translate(135 263)" d="M3 0h1v1h-1zM2 1h2v1h-2zM2 2h2v1h-2zM1 3h1v1h-1zM3 3h1v1h-1zM1 4h1v1h-1zM3 4h1v1h-1zM0 5h1v1h-1zM3 5h1v1h-1zM0 6h5v1h-5zM3 7h1v1h-1zM2 8h3v1h-3z"/><path transform="translate(143 263)" d="M1 0h3v1h-3zM0 1h1v1h-1zM4 1h1v1h-1zM0 2h1v1h-1zM4 2h1v1h-1zM0 3h1v1h-1zM4 3h1v1h-1zM0 4h1v1h-1zM4 4h1v1h-1zM0 5h1v1h-1zM4 5h1v1h-1zM0 6h1v1h-1zM4 6h1v1h-1zM0 7h1v1h-1zM4 7h1v1h-1zM1 8h3v1h-3z"/><path transform="translate(151 263)" d="M1 0h3v1h-3zM0 1h1v1h-1zM4 1h1v1h-1zM0 2h1v1h-1zM4 2h1v1h-1zM0 3h1v1h-1zM4 3h1v1h-1zM1 4h3v1h-3zM0 5h1v1h-1zM4 5h1v1h-1zM0 6h1v1h-1zM4 6h1v1h-1zM0 7h1v1h-1zM4 7h1v1h-1zM1 8h3v1h-3z"/><path transform="translate(159 263)" d="M1 0h3v1h-3zM0 1h1v1h-1zM4 1h1v1h-1zM0 2h1v1h-1zM4 2h1v1h-1zM0 3h1v1h-1zM4 3h1v1h-1zM0 4h1v1h-1zM4 4h1v1h-1zM0 5h1v1h-1zM4 5h1v1h-1zM0 6h1v1h-1zM4 6h1v1h-1zM0 7h1v1h-1zM4 7h1v1h-1zM1 8h3v1h-3z"/><path transform="translate(167 263)" d="M2 0h1v1h-1zM0 1h3v1h-3zM2 2h1v1h-1zM2 3h1v1h-1zM2 4h1v1h-1zM2 5h1v1h-1zM2 6h1v1h-1zM2 7h1v1h-1zM0 8h5v1h-5z"/></g><rect x="9" y="285" width="166" height="27" fill="#ff0"/><rect x="189" y="294" width="10" height="10" fill="#000"/><rect x="190" y="295" width="8" height="8" fill="#c0c0c0"/><rect x="42" y="299" width="15" height="1" fill="#000"/><rect x="82" y="299" width="17" height="1" fill="#000"/><rect x="57" y="286" width="25" height="25" fill="#000"/><rect x="58" y="287" width="23" height="23" fill="#a0c0e0"/><rect x="65" y="290" width="1.4" height="17" fill="#f00"/><polygon points="66,290 60.5,297 62.799999999999955,297 66,293" fill="#f00"/><rect x="73" y="290" width="1.4" height="17" fill="#f00"/><polygon points="73,307 78.5,300 76.20000000000005,300 73,304" fill="#f00"/><g fill="#000"><path transform="translate(20 294)" d="M1 0h3v1h-3zM0 1h1v1h-1zM4 1h1v1h-1zM4 2h1v1h-1zM4 3h1v1h-1zM2 4h2v1h-2zM4 5h1v1h-1zM4 6h1v1h-1zM0 7h1v1h-1zM4 7h1v1h-1zM1 8h3v1h-3z"/><path transform="translate(28 294)" d="M1 0h3v1h-3zM0 1h1v1h-1zM4 1h1v1h-1zM0 2h1v1h-1zM4 2h1v1h-1zM0 3h1v1h-1zM4 3h1v1h-1zM1 4h3v1h-3zM0 5h1v1h-1zM4 5h1v1h-1zM0 6h1v1h-1zM4 6h1v1h-1zM0 7h1v1h-1zM4 7h1v1h-1zM1 8h3v1h-3z"/></g><g fill="#0000ff"><path transform="translate(110 294)" d="M0 5h7v1h-7z"/><path transform="translate(119 294)" d="M1 0h3v1h-3zM0 1h1v1h-1zM4 1h1v1h-1zM0 2h1v1h-1zM4 2h1v1h-1zM0 3h1v1h-1zM4 3h1v1h-1zM0 4h1v1h-1zM4 4h1v1h-1zM0 5h1v1h-1zM4 5h1v1h-1zM0 6h1v1h-1zM4 6h1v1h-1zM0 7h1v1h-1zM4 7h1v1h-1zM1 8h3v1h-3z"/><path transform="translate(126 294)" d="M3 8h1v1h-1z"/><path transform="translate(135 294)" d="M3 0h1v1h-1zM2 1h2v1h-2zM2 2h2v1h-2zM1 3h1v1h-1zM3 3h1v1h-1zM1 4h1v1h-1zM3 4h1v1h-1zM0 5h1v1h-1zM3 5h1v1h-1zM0 6h5v1h-5zM3 7h1v1h-1zM2 8h3v1h-3z"/><path transform="translate(143 294)" d="M2 0h1v1h-1zM0 1h3v1h-3zM2 2h1v1h-1zM2 3h1v1h-1zM2 4h1v1h-1zM2 5h1v1h-1zM2 6h1v1h-1zM2 7h1v1h-1zM0 8h5v1h-5z"/><path transform="translate(151 294)" d="M1 0h3v1h-3zM0 1h1v1h-1zM4 1h1v1h-1zM0 2h1v1h-1zM4 2h1v1h-1zM0 3h1v1h-1zM4 3h1v1h-1zM1 4h3v1h-3zM0 5h1v1h-1zM4 5h1v1h-1zM0 6h1v1h-1zM4 6h1v1h-1zM0 7h1v1h-1zM4 7h1v1h-1zM1 8h3v1h-3z"/><path transform="translate(159 294)" d="M1 0h3v1h-3zM0 1h1v1h-1zM4 1h1v1h-1zM0 2h1v1h-1zM4 2h1v1h-1zM0 3h1v1h-1zM4 3h1v1h-1zM1 4h3v1h-3zM0 5h1v1h-1zM4 5h1v1h-1zM0 6h1v1h-1zM4 6h1v1h-1zM0 7h1v1h-1zM4 7h1v1h-1zM1 8h3v1h-3z"/><path transform="translate(167 294)" d="M1 0h3v1h-3zM0 1h1v1h-1zM4 1h1v1h-1zM4 2h1v1h-1zM4 3h1v1h-1zM2 4h2v1h-2zM4 5h1v1h-1zM4 6h1v1h-1zM0 7h1v1h-1zM4 7h1v1h-1zM1 8h3v1h-3z"/></g><rect x="42" y="330" width="15" height="1" fill="#000"/><rect x="82" y="330" width="17" height="1" fill="#000"/><rect x="57" y="317" width="25" height="25" fill="#000"/><rect x="58" y="318" width="23" height="23" fill="#a0c0e0"/><rect x="65" y="321" width="1.4" height="17" fill="#f00"/><polygon points="66,321 60.5,328 62.799999999999955,328 66,324" fill="#f00"/><rect x="73" y="321" width="1.4" height="17" fill="#f00"/><polygon points="73,338 78.5,331 76.20000000000005,331 73,335" fill="#f00"/><g fill="#000"><path transform="translate(20 325)" d="M1 0h3v1h-3zM0 1h1v1h-1zM4 1h1v1h-1zM4 2h1v1h-1zM4 3h1v1h-1zM2 4h2v1h-2zM4 5h1v1h-1zM4 6h1v1h-1zM0 7h1v1h-1zM4 7h1v1h-1zM1 8h3v1h-3z"/><path transform="translate(28 325)" d="M0 0h5v1h-5zM0 1h1v1h-1zM4 1h1v1h-1zM4 2h1v1h-1zM3 3h1v1h-1zM3 4h1v1h-1zM2 5h1v1h-1zM2 6h1v1h-1zM1 7h1v1h-1zM1 8h1v1h-1z"/></g><g fill="#0000ff"><path transform="translate(110 325)" d="M0 5h7v1h-7z"/><path transform="translate(119 325)" d="M1 0h3v1h-3zM0 1h1v1h-1zM4 1h1v1h-1zM0 2h1v1h-1zM4 2h1v1h-1zM0 3h1v1h-1zM4 3h1v1h-1zM0 4h1v1h-1zM4 4h1v1h-1zM0 5h1v1h-1zM4 5h1v1h-1zM0 6h1v1h-1zM4 6h1v1h-1zM0 7h1v1h-1zM4 7h1v1h-1zM1 8h3v1h-3z"/><path transform="translate(126 325)" d="M3 8h1v1h-1z"/><path transform="translate(135 325)" d="M3 0h1v1h-1zM2 1h2v1h-2zM2 2h2v1h-2zM1 3h1v1h-1zM3 3h1v1h-1zM1 4h1v1h-1zM3 4h1v1h-1zM0 5h1v1h-1zM3 5h1v1h-1zM0 6h5v1h-5zM3 7h1v1h-1zM2 8h3v1h-3z"/><path transform="translate(143 325)" d="M2 0h1v1h-1zM0 1h3v1h-3zM2 2h1v1h-1zM2 3h1v1h-1zM2 4h1v1h-1zM2 5h1v1h-1zM2 6h1v1h-1zM2 7h1v1h-1zM0 8h5v1h-5z"/><path transform="translate(151 325)" d="M1 0h3v1h-3zM0 1h1v1h-1zM4 1h1v1h-1zM0 2h1v1h-1zM4 2h1v1h-1zM0 3h1v1h-1zM4 3h1v1h-1zM1 4h4v1h-4zM4 5h1v1h-1zM4 6h1v1h-1zM3 7h1v1h-1zM1 8h2v1h-2z"/><path transform="translate(159 325)" d="M2 0h1v1h-1zM0 1h3v1h-3zM2 2h1v1h-1zM2 3h1v1h-1zM2 4h1v1h-1zM2 5h1v1h-1zM2 6h1v1h-1zM2 7h1v1h-1zM0 8h5v1h-5z"/><path transform="translate(167 325)" d="M3 0h1v1h-1zM2 1h2v1h-2zM2 2h2v1h-2zM1 3h1v1h-1zM3 3h1v1h-1zM1 4h1v1h-1zM3 4h1v1h-1zM0 5h1v1h-1zM3 5h1v1h-1zM0 6h5v1h-5zM3 7h1v1h-1zM2 8h3v1h-3z"/></g><rect x="42" y="361" width="15" height="1" fill="#000"/><rect x="82" y="361" width="17" height="1" fill="#000"/><rect x="57" y="348" width="25" height="25" fill="#000"/><rect x="58" y="349" width="23" height="23" fill="#a0c0e0"/><rect x="65" y="352" width="1.4" height="17" fill="#f00"/><polygon points="66,352 60.5,359 62.799999999999955,359 66,355" fill="#f00"/><rect x="73" y="352" width="1.4" height="17" fill="#f00"/><polygon points="73,369 78.5,362 76.20000000000005,362 73,366" fill="#f00"/><g fill="#000"><path transform="translate(20 356)" d="M1 0h3v1h-3zM0 1h1v1h-1zM4 1h1v1h-1zM4 2h1v1h-1zM4 3h1v1h-1zM2 4h2v1h-2zM4 5h1v1h-1zM4 6h1v1h-1zM0 7h1v1h-1zM4 7h1v1h-1zM1 8h3v1h-3z"/><path transform="translate(28 356)" d="M2 0h2v1h-2zM1 1h1v1h-1zM0 2h1v1h-1zM0 3h1v1h-1zM0 4h4v1h-4zM0 5h1v1h-1zM4 5h1v1h-1zM0 6h1v1h-1zM4 6h1v1h-1zM0 7h1v1h-1zM4 7h1v1h-1zM1 8h3v1h-3z"/></g><g fill="#0000ff"><path transform="translate(110 356)" d="M0 5h7v1h-7z"/><path transform="translate(119 356)" d="M1 0h3v1h-3zM0 1h1v1h-1zM4 1h1v1h-1zM0 2h1v1h-1zM4 2h1v1h-1zM0 3h1v1h-1zM4 3h1v1h-1zM0 4h1v1h-1zM4 4h1v1h-1zM0 5h1v1h-1zM4 5h1v1h-1zM0 6h1v1h-1zM4 6h1v1h-1zM0 7h1v1h-1zM4 7h1v1h-1zM1 8h3v1h-3z"/><path transform="translate(126 356)" d="M3 8h1v1h-1z"/><path transform="translate(135 356)" d="M3 0h1v1h-1zM2 1h2v1h-2zM2 2h2v1h-2zM1 3h1v1h-1zM3 3h1v1h-1zM1 4h1v1h-1zM3 4h1v1h-1zM0 5h1v1h-1zM3 5h1v1h-1zM0 6h5v1h-5zM3 7h1v1h-1zM2 8h3v1h-3z"/><path transform="translate(143 356)" d="M1 0h3v1h-3zM0 1h1v1h-1zM4 1h1v1h-1zM4 2h1v1h-1zM4 3h1v1h-1zM3 4h1v1h-1zM2 5h1v1h-1zM1 6h1v1h-1zM0 7h1v1h-1zM0 8h5v1h-5z"/><path transform="translate(151 356)" d="M2 0h2v1h-2zM1 1h1v1h-1zM0 2h1v1h-1zM0 3h1v1h-1zM0 4h4v1h-4zM0 5h1v1h-1zM4 5h1v1h-1zM0 6h1v1h-1zM4 6h1v1h-1zM0 7h1v1h-1zM4 7h1v1h-1zM1 8h3v1h-3z"/><path transform="translate(159 356)" d="M2 0h1v1h-1zM0 1h3v1h-3zM2 2h1v1h-1zM2 3h1v1h-1zM2 4h1v1h-1zM2 5h1v1h-1zM2 6h1v1h-1zM2 7h1v1h-1zM0 8h5v1h-5z"/><path transform="translate(167 356)" d="M2 0h1v1h-1zM0 1h3v1h-3zM2 2h1v1h-1zM2 3h1v1h-1zM2 4h1v1h-1zM2 5h1v1h-1zM2 6h1v1h-1zM2 7h1v1h-1zM0 8h5v1h-5z"/></g><rect x="42" y="392" width="15" height="1" fill="#000"/><rect x="82" y="392" width="17" height="1" fill="#000"/><rect x="57" y="379" width="25" height="25" fill="#000"/><rect x="58" y="380" width="23" height="23" fill="#a0c0e0"/><rect x="65" y="383" width="1.4" height="17" fill="#f00"/><polygon points="66,383 60.5,390 62.799999999999955,390 66,386" fill="#f00"/><rect x="73" y="383" width="1.4" height="17" fill="#f00"/><polygon points="73,400 78.5,393 76.20000000000005,393 73,397" fill="#f00"/><g fill="#000"><path transform="translate(20 387)" d="M1 0h3v1h-3zM0 1h1v1h-1zM4 1h1v1h-1zM4 2h1v1h-1zM4 3h1v1h-1zM2 4h2v1h-2zM4 5h1v1h-1zM4 6h1v1h-1zM0 7h1v1h-1zM4 7h1v1h-1zM1 8h3v1h-3z"/><path transform="translate(28 387)" d="M0 0h5v1h-5zM0 1h1v1h-1zM0 2h1v1h-1zM0 3h1v1h-1zM0 4h4v1h-4zM4 5h1v1h-1zM4 6h1v1h-1zM0 7h1v1h-1zM4 7h1v1h-1zM1 8h3v1h-3z"/></g><g fill="#0000ff"><path transform="translate(110 387)" d="M0 5h7v1h-7z"/><path transform="translate(119 387)" d="M1 0h3v1h-3zM0 1h1v1h-1zM4 1h1v1h-1zM0 2h1v1h-1zM4 2h1v1h-1zM0 3h1v1h-1zM4 3h1v1h-1zM0 4h1v1h-1zM4 4h1v1h-1zM0 5h1v1h-1zM4 5h1v1h-1zM0 6h1v1h-1zM4 6h1v1h-1zM0 7h1v1h-1zM4 7h1v1h-1zM1 8h3v1h-3z"/><path transform="translate(126 387)" d="M3 8h1v1h-1z"/><path transform="translate(135 387)" d="M3 0h1v1h-1zM2 1h2v1h-2zM2 2h2v1h-2zM1 3h1v1h-1zM3 3h1v1h-1zM1 4h1v1h-1zM3 4h1v1h-1zM0 5h1v1h-1zM3 5h1v1h-1zM0 6h5v1h-5zM3 7h1v1h-1zM2 8h3v1h-3z"/><path transform="translate(143 387)" d="M1 0h3v1h-3zM0 1h1v1h-1zM4 1h1v1h-1zM4 2h1v1h-1zM4 3h1v1h-1zM2 4h2v1h-2zM4 5h1v1h-1zM4 6h1v1h-1zM0 7h1v1h-1zM4 7h1v1h-1zM1 8h3v1h-3z"/><path transform="translate(151 387)" d="M1 0h3v1h-3zM0 1h1v1h-1zM4 1h1v1h-1zM0 2h1v1h-1zM4 2h1v1h-1zM0 3h1v1h-1zM4 3h1v1h-1zM0 4h1v1h-1zM4 4h1v1h-1zM0 5h1v1h-1zM4 5h1v1h-1zM0 6h1v1h-1zM4 6h1v1h-1zM0 7h1v1h-1zM4 7h1v1h-1zM1 8h3v1h-3z"/><path transform="translate(159 387)" d="M3 0h1v1h-1zM2 1h2v1h-2zM2 2h2v1h-2zM1 3h1v1h-1zM3 3h1v1h-1zM1 4h1v1h-1zM3 4h1v1h-1zM0 5h1v1h-1zM3 5h1v1h-1zM0 6h5v1h-5zM3 7h1v1h-1zM2 8h3v1h-3z"/><path transform="translate(167 387)" d="M1 0h3v1h-3zM0 1h1v1h-1zM4 1h1v1h-1zM4 2h1v1h-1zM4 3h1v1h-1zM2 4h2v1h-2zM4 5h1v1h-1zM4 6h1v1h-1zM0 7h1v1h-1zM4 7h1v1h-1zM1 8h3v1h-3z"/></g><line x1="10" y1="34" x2="179" y2="34" stroke="#0f0" stroke-width="2" stroke-dasharray="2 2"/></svg>
</div>

<!-- charge row -->
<div class="inp" style="left:53px;top:417px;width:29px;height:19px"></div>
<div class="combo" style="left:128px;top:417px;width:71px;height:18px"></div>
<div class="dbtn" style="left:182px;top:418px;width:16px;height:16px"></div>
<!-- tab panel -->
<div class="a" style="left:4px;top:469px;width:931px;height:104px;background:#fff;border:1px solid #898c95;border-bottom:none"></div>
<div class="tab" style="left:5px;top:448px;width:69px;height:22px"></div>
<div class="tab" style="left:137px;top:448px;width:74px;height:22px"></div>
<div class="tab" style="left:211px;top:448px;width:61px;height:22px"></div>
<div class="a" style="left:73px;top:446px;width:65px;height:24px;background:#fff;border:1px solid #898c95;border-bottom:none"></div>
<div class="inp" style="left:290px;top:480px;width:45px;height:19px"></div>
<div class="combo" style="left:628px;top:480px;width:71px;height:18px"></div>
<div class="dbtn" style="left:682px;top:481px;width:16px;height:16px"></div>
<div class="combo" style="left:66px;top:509px;width:101px;height:18px"></div>
<div class="dbtn" style="left:150px;top:510px;width:16px;height:16px"></div>
<div class="inp" style="left:230px;top:509px;width:699px;height:19px"></div>
<div class="inp" style="left:73px;top:540px;width:761px;height:19px"></div>
<div class="btn" style="left:850px;top:539px;width:78px;height:21px"></div>
<!-- separator -->
<div class="a" style="left:4px;top:579px;width:931px;height:1px;background:#a0a0a0"></div>
<div class="a" style="left:4px;top:580px;width:931px;height:1px;background:#fff"></div>
<div class="btn" style="left:337px;top:588px;width:78px;height:21px"></div>
<div class="btn" style="left:422px;top:588px;width:78px;height:21px"></div>
<div class="btn" style="left:507px;top:588px;width:78px;height:21px"></div>
<div class="a" style="left:930px;top:600px;width:1px;height:1px;background:#fff"></div><div class="a" style="left:931px;top:601px;width:1px;height:1px;background:#9a9a9a"></div><div class="a" style="left:927px;top:603px;width:1px;height:1px;background:#fff"></div><div class="a" style="left:928px;top:604px;width:1px;height:1px;background:#9a9a9a"></div><div class="a" style="left:930px;top:603px;width:1px;height:1px;background:#fff"></div><div class="a" style="left:931px;top:604px;width:1px;height:1px;background:#9a9a9a"></div><div class="a" style="left:924px;top:606px;width:1px;height:1px;background:#fff"></div><div class="a" style="left:925px;top:607px;width:1px;height:1px;background:#9a9a9a"></div><div class="a" style="left:927px;top:606px;width:1px;height:1px;background:#fff"></div><div class="a" style="left:928px;top:607px;width:1px;height:1px;background:#9a9a9a"></div><div class="a" style="left:930px;top:606px;width:1px;height:1px;background:#fff"></div><div class="a" style="left:931px;top:607px;width:1px;height:1px;background:#9a9a9a"></div>
<div class="t" style="left:20.62px;top:377px;transform:scaleX(0.8802);">MO ( (MO = 41) ; Isovalue = 0.02 )</div>
<div class="t" style="left:9.80px;top:419px;transform:scaleX(0.8690);">Charge:</div>
<div class="t" style="left:56.80px;top:420px;transform:scaleX(0.6429);">0</div>
<div class="t" style="left:97.41px;top:419px;transform:scaleX(0.8923);">Spin:</div>
<div class="t" style="left:132.14px;top:418px;transform:scaleX(0.8611);">Singlet</div>
<div class="t" style="left:217.00px;top:419px;transform:scaleX(0.9651);">Gaussian MOs from:</div>
<div class="t" style="left:329.20px;top:419px;transform:scaleX(0.9987);">//icnas3.cc.ic.ac.uk/zw4415/</div>
<div class="t" style="left:479.00px;top:419px;transform:scaleX(1.0000);">downloads/</div>
<div class="t" style="left:540.70px;top:419px;transform:scaleX(0.9373);">Zinan_Wang_</div>
<div class="t" style="left:610.82px;top:419px;transform:scaleX(0.8828);">EX2_REACT1and2_nrg_</div>
<div class="t" style="left:729.59px;top:419px;transform:scaleX(1.0107);">B3LYP.chk</div>
<div class="t" style="left:12.51px;top:451px;transform:scaleX(0.8885);">New MOs</div>
<div class="t" style="left:82.00px;top:450px;transform:scaleX(0.8333);">Visualize</div>
<div class="t" style="left:144.70px;top:451px;transform:scaleX(0.8644);">Calculation</div>
<div class="t" style="left:218.85px;top:451px;transform:scaleX(0.8523);">Diagram</div>
<div class="t" style="left:240.80px;top:482px;transform:scaleX(0.8978);">Isovalue:</div>
<div class="t" style="left:293.80px;top:483px;transform:scaleX(0.8609);">0.02</div>
<div class="t" style="left:570.80px;top:482px;transform:scaleX(0.8842);">Cube Grid:</div>
<div class="t" style="left:632.60px;top:481px;transform:scaleX(0.8179);">Coarse</div>
<div class="t" style="left:11.20px;top:511px;transform:scaleX(0.9132);">Add Type:</div>
<div class="t" style="left:70.43px;top:510px;transform:scaleX(0.8712);">Highlighted</div>
<div class="t" style="left:183.20px;top:511px;transform:scaleX(0.8739);">Add List:</div>
<div class="t" style="left:233.00px;top:512px;transform:scaleX(0.8636);">38a-45a</div>
<div class="t" style="left:10.40px;top:542px;transform:scaleX(0.8600);">Current List:</div>
<div class="t" style="left:76.00px;top:543px;transform:scaleX(0.8614);color:#6d6d6d">38a-45a</div>
<div class="t" style="left:864.38px;top:542px;transform:scaleX(0.9200);">Update ...</div>
<div class="t" style="left:368.80px;top:591px;transform:scaleX(0.8800);">Ok</div>
<div class="t" style="left:443.40px;top:591px;transform:scaleX(0.8892);">Cancel</div>
<div class="t" style="left:534.44px;top:591px;transform:scaleX(0.8625);">Help</div>
</body></html>
